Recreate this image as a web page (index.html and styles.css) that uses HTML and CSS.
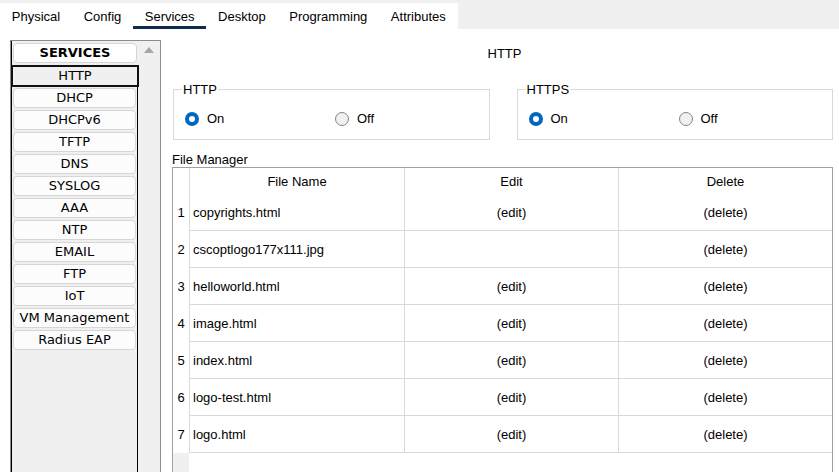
FILE: index.html
```html
<!DOCTYPE html>
<html>
<head>
<meta charset="utf-8">
<link rel="stylesheet" href="styles.css">
</head>
<body>
<div class="tabbar">
  <div class="tabs">
    <div class="tab">Physical</div>
    <div class="tab">Config</div>
    <div class="tab active">Services</div>
    <div class="tab">Desktop</div>
    <div class="tab">Programming</div>
    <div class="tab">Attributes</div>
  </div>
</div>
<div class="main">
  <div class="sidebar">
    <div class="list">
      <div class="head"><div class="btn bold">SERVICES</div></div>
      <div class="items">
        <div class="item sel">HTTP</div>
        <div class="slot"><div class="btn">DHCP</div></div>
        <div class="slot"><div class="btn">DHCPv6</div></div>
        <div class="slot"><div class="btn">TFTP</div></div>
        <div class="slot"><div class="btn">DNS</div></div>
        <div class="slot"><div class="btn">SYSLOG</div></div>
        <div class="slot"><div class="btn">AAA</div></div>
        <div class="slot"><div class="btn">NTP</div></div>
        <div class="slot"><div class="btn">EMAIL</div></div>
        <div class="slot"><div class="btn">FTP</div></div>
        <div class="slot"><div class="btn">IoT</div></div>
        <div class="slot"><div class="btn">VM Management</div></div>
        <div class="slot"><div class="btn">Radius EAP</div></div>
      </div>
    </div>
    <div class="scroll">
      <svg class="arrow" width="10" height="6" viewBox="0 0 10 6"><polygon points="5,0 10,6 0,6" fill="#a6a6a6"/></svg>
    </div>
  </div>
  <div class="content">
    <div class="title">HTTP</div>
    <div class="boxes">
      <fieldset class="box">
        <legend>HTTP</legend>
        <div class="radios">
          <div class="opt"><span class="radio on"></span>On</div>
          <div class="opt"><span class="radio"></span>Off</div>
        </div>
      </fieldset>
      <fieldset class="box">
        <legend>HTTPS</legend>
        <div class="radios">
          <div class="opt"><span class="radio on"></span>On</div>
          <div class="opt"><span class="radio"></span>Off</div>
        </div>
      </fieldset>
    </div>
    <div class="fm-label">File Manager</div>
    <div class="tbl-wrap">
      <table class="tbl">
        <thead>
          <tr><th class="num"></th><th class="c-name">File Name</th><th class="c-edit">Edit</th><th class="c-del">Delete</th></tr>
        </thead>
        <tbody>
          <tr><td class="num">1</td><td class="c-name">copyrights.html</td><td class="c-edit">(edit)</td><td class="c-del">(delete)</td></tr>
          <tr><td class="num">2</td><td class="c-name">cscoptlogo177x111.jpg</td><td class="c-edit"></td><td class="c-del">(delete)</td></tr>
          <tr><td class="num">3</td><td class="c-name">helloworld.html</td><td class="c-edit">(edit)</td><td class="c-del">(delete)</td></tr>
          <tr><td class="num">4</td><td class="c-name">image.html</td><td class="c-edit">(edit)</td><td class="c-del">(delete)</td></tr>
          <tr><td class="num">5</td><td class="c-name">index.html</td><td class="c-edit">(edit)</td><td class="c-del">(delete)</td></tr>
          <tr><td class="num">6</td><td class="c-name">logo-test.html</td><td class="c-edit">(edit)</td><td class="c-del">(delete)</td></tr>
          <tr><td class="num">7</td><td class="c-name">logo.html</td><td class="c-edit">(edit)</td><td class="c-del">(delete)</td></tr>
        </tbody>
      </table>
    </div>
  </div>
</div>
</body>
</html>
```

FILE: styles.css
```css
* { box-sizing: border-box; }
html, body { margin: 0; padding: 0; }
body {
  width: 839px;
  height: 472px;
  overflow: hidden;
  background: #ffffff;
  font-family: "Liberation Sans", Arial, sans-serif;
  font-size: 13px;
  color: #000;
}

/* Tabs */
.tabbar {
  height: 29px;
  padding-top: 3px;
  background: #f0f0f0;
  display: flex;
}
.tabs {
  display: flex;
  background: #fff;
  height: 26px;
  overflow: hidden;
}
.tab {
  padding: 6px 11.75px 1px;
  line-height: 15px;
  border-bottom: 3px solid transparent;
  white-space: nowrap;
}
.tab.active { border-bottom-color: #0f2b4d; }

/* Main */
.main {
  display: flex;
  height: 443px;
  padding-top: 11px;
}

/* Sidebar */
.sidebar {
  margin-left: 10px;
  width: 151px;
  border: 1px solid #8c8c8c;
  border-bottom: none;
  background: #f0f0f0;
  display: flex;
}
.list {
  width: 127px;
  border-left: 1px solid #000;
  padding-top: 2px;
  font-family: "DejaVu Sans", Verdana, sans-serif;
  font-size: 13px;
}
.head { height: 22px; padding: 0 1px 1px 1px; }
.items { border-right: 1px solid #000; height: 100%; }
.slot { height: 22px; padding: 1px 1px; }
.btn {
  height: 20px;
  line-height: 18px;
  text-align: center;
  background: #fcfcfc;
  border: 1px solid #d6d6d6;
  border-radius: 4px;
  white-space: nowrap;
}
.btn.bold { font-weight: bold; background: #fff; }
.item.sel {
  height: 22px;
  line-height: 18px;
  text-align: center;
  border: 2px solid #111;
  background: #f0f0f0;
  margin: 0 -2px 0 -1px;
}
.scroll {
  flex: 1;
  display: flex;
  justify-content: center;
  padding-top: 6px;
}
.arrow { display: block; }

/* Content */
.content {
  flex: 1;
  padding: 0 6px 0 11px;
  display: flex;
  flex-direction: column;
}
.title {
  height: 26px;
  padding-top: 2px;
  line-height: 24px;
  text-align: center;
  padding-left: 4px;
}
.boxes {
  margin-top: 16px;
  padding-left: 1px;
  display: grid;
  grid-template-columns: 1fr 1fr;
  gap: 27px;
}
.box {
  margin: 0;
  border: 1px solid #d9d9d9;
  padding: 0 10px 13px 11px;
  min-width: 0;
}
.box legend {
  padding: 0 1px;
  margin-left: -3px;
  line-height: 15px;
}
.radios {
  display: grid;
  grid-template-columns: 150px 1fr;
  margin-top: 14px;
}
.opt {
  display: flex;
  align-items: center;
  gap: 8px;
  height: 15px;
  line-height: 15px;
}
.radio {
  width: 14px;
  height: 14px;
  border-radius: 50%;
  border: 1px solid #868686;
  background: #f1f1f1;
  flex: none;
}
.radio.on {
  border: 4px solid #0067c0;
  background: #fff;
}
.fm-label {
  margin-top: 12px;
  line-height: 15px;
  height: 15px;
}
.tbl-wrap {
  flex: 1;
  border: 1px solid #a0a0a0;
  border-bottom: none;
  background: linear-gradient(to right, #f0f0f0 16px, #fff 16px);
  overflow: hidden;
}
.tbl {
  border-collapse: separate;
  border-spacing: 0;
  width: 659px;
  table-layout: fixed;
}
.tbl th, .tbl td {
  padding: 0;
  font-weight: normal;
  white-space: nowrap;
  background: #fff;
}
.tbl th { height: 26px; text-align: center; }
.tbl td { height: 37px; border-bottom: 1px solid #d9d9d9; }
.tbl .num {
  width: 17px;
  text-align: center;
  border-right: 1px solid #d9d9d9;
  border-bottom: none;
}
.tbl .c-name { width: 214px; }
.tbl td.c-name { padding-left: 3px; }
.tbl .c-edit { width: 214px; border-left: 1px solid #d9d9d9; text-align: center; }
.tbl .c-del { width: 214px; border-left: 1px solid #d9d9d9; text-align: center; }
```
